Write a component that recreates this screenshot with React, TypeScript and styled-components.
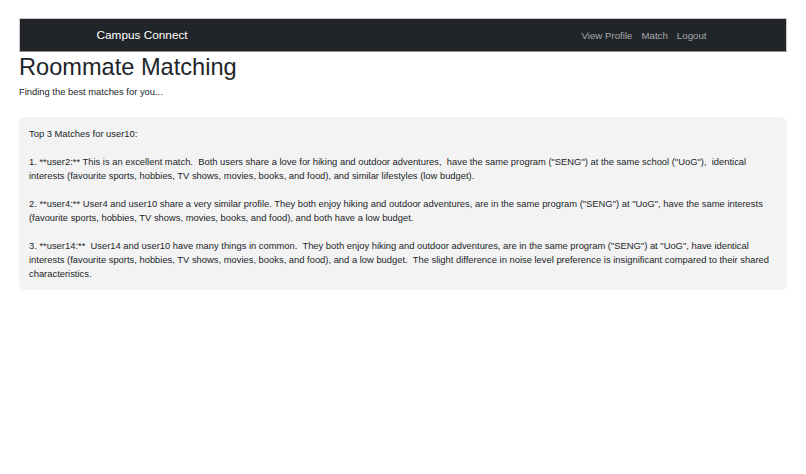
import React from "react";
import styled, { createGlobalStyle } from "styled-components";

const Global = createGlobalStyle`
  html, body { margin: 0; padding: 0; background: #ffffff; }
  body { font-family: "Liberation Sans", Arial, sans-serif; color: #212529; }
`;

const Page = styled.div`
  padding: 18px 19px 0 19px;
`;

const Nav = styled.nav`
  background: #212529;
  border: 1px solid #c8c8c8;
  border-bottom-color: #8a8a8a;
  height: 34px;
  box-sizing: border-box;
  display: flex;
  justify-content: center;
`;

const NavInner = styled.div`
  width: 610px;
  display: flex;
  align-items: center;
  justify-content: space-between;
  padding-left: 1px;
`;

const Brand = styled.a`
  color: #ffffff;
  font-size: 11.8px;
  text-decoration: none;
  margin-left: -2px;
`;

const Links = styled.div`
  display: flex;
  gap: 9px;
  margin-right: 2px;
`;

const NavLink = styled.a`
  color: rgba(255, 255, 255, 0.6);
  font-size: 9.7px;
  text-decoration: none;
`;

const Title = styled.h1`
  font-size: 23.6px;
  font-weight: 400;
  margin: 0;
  line-height: 30px;
  color: #212529;
`;

const Sub = styled.p`
  font-size: 9.4px;
  margin: 3px 0 0 0;
  line-height: 14px;
`;

const Card = styled.div`
  margin-top: 18px;
  background: #f3f3f3;
  border-radius: 6px;
  padding: 10px 10px 9px 10px;
  font-size: 9.4px;
  line-height: 14px;
  white-space: pre-wrap;
  color: #212529;
`;

const text = `Top 3 Matches for user10:

1. **user2:** This is an excellent match.  Both users share a love for hiking and outdoor adventures,  have the same program ("SENG") at the same school ("UoG"),  identical interests (favourite sports, hobbies, TV shows, movies, books, and food), and similar lifestyles (low budget).

2. **user4:** User4 and user10 share a very similar profile. They both enjoy hiking and outdoor adventures, are in the same program ("SENG") at "UoG", have the same interests (favourite sports, hobbies, TV shows, movies, books, and food), and both have a low budget.

3. **user14:**  User14 and user10 have many things in common.  They both enjoy hiking and outdoor adventures, are in the same program ("SENG") at "UoG", have identical interests (favourite sports, hobbies, TV shows, movies, books, and food), and a low budget.  The slight difference in noise level preference is insignificant compared to their shared characteristics.`;

export default function App() {
  return (
    <>
      <Global />
      <Page>
        <Nav>
          <NavInner>
            <Brand href="#">Campus Connect</Brand>
            <Links>
              <NavLink href="#">View Profile</NavLink>
              <NavLink href="#">Match</NavLink>
              <NavLink href="#">Logout</NavLink>
            </Links>
          </NavInner>
        </Nav>
        <Title>Roommate Matching</Title>
        <Sub>Finding the best matches for you...</Sub>
        <Card>{text}</Card>
      </Page>
    </>
  );
}
